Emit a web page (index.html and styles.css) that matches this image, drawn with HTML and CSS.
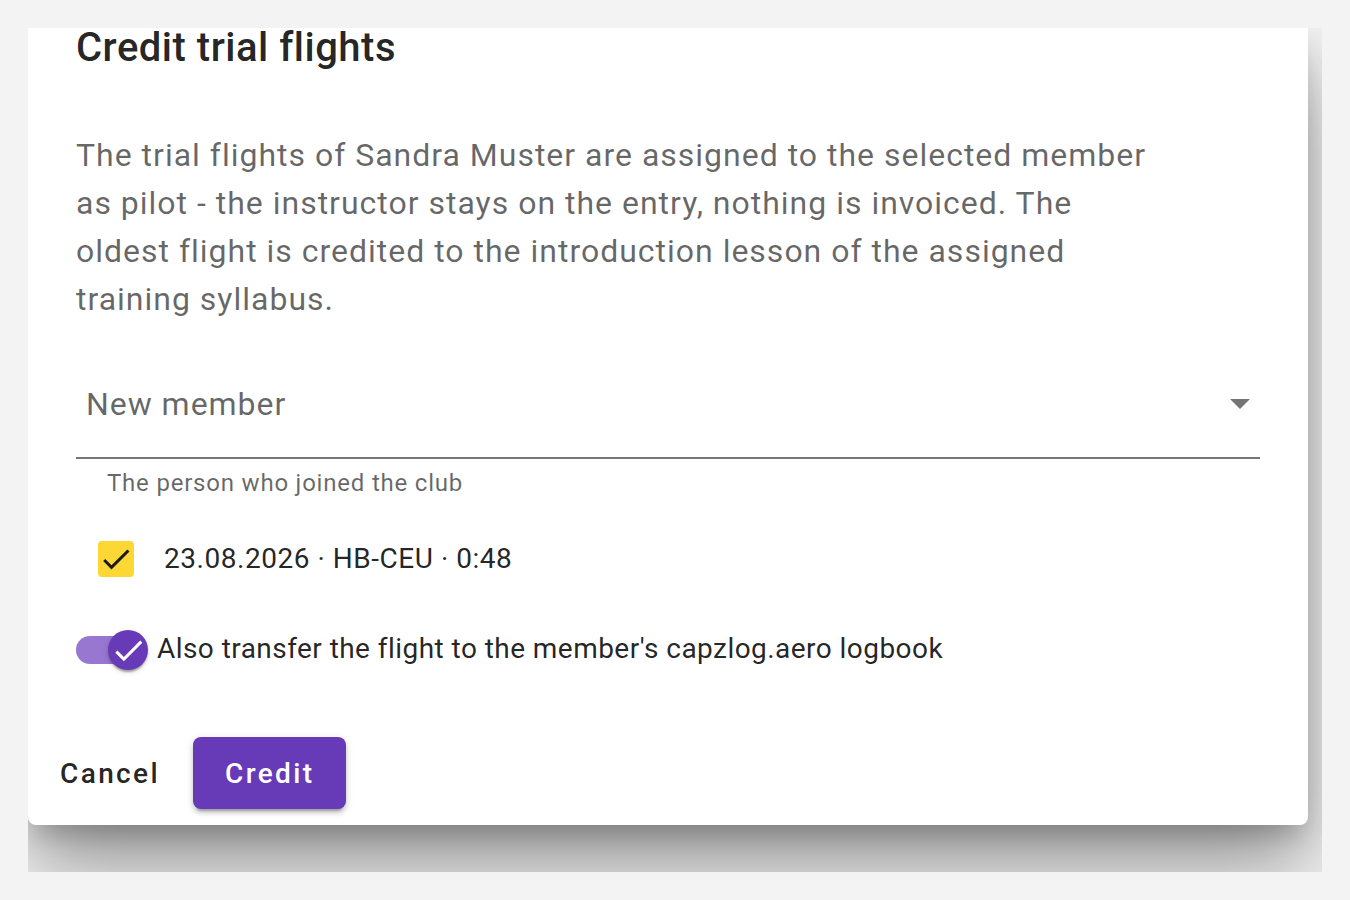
FILE: index.html
```html
<!DOCTYPE html>
<html lang="en">
<head>
<meta charset="utf-8">
<title>Credit trial flights</title>
<link rel="stylesheet" href="styles.css">
</head>
<body>
<div class="frame">
  <div class="dialog">
    <h2 class="title">Credit trial flights</h2>
    <p class="text">The trial flights of Sandra Muster are assigned to the selected member as pilot - the instructor stays on the entry, nothing is invoiced. The oldest flight is credited to the introduction lesson of the assigned training syllabus.</p>
    <div class="field">
      <div class="select">
        <span class="select-label">New member</span>
        <svg class="arrow" viewBox="7 10 10 5" width="20" height="10"><path d="M7 10l5 5 5-5z"/></svg>
      </div>
      <div class="helper">The person who joined the club</div>
    </div>
    <div class="check-row">
      <span class="checkbox">
        <svg viewBox="0 0 24 24" width="36" height="36"><path d="M9 16.17L4.83 12l-1.42 1.41L9 19 21 7l-1.41-1.41z"/></svg>
      </span>
      <span class="row-text">23.08.2026 · HB-CEU · 0:48</span>
    </div>
    <div class="switch-row">
      <span class="switch">
        <span class="track"></span>
        <span class="thumb">
          <svg viewBox="0 0 24 24" width="37" height="37"><path d="M9 16.17L4.83 12l-1.42 1.41L9 19 21 7l-1.41-1.41z"/></svg>
        </span>
      </span>
      <span class="row-text switch-text">Also transfer the flight to the member's capzlog.aero logbook</span>
    </div>
    <div class="actions">
      <button class="btn btn-text">Cancel</button>
      <button class="btn btn-primary">Credit</button>
    </div>
  </div>
</div>
</body>
</html>
```

FILE: styles.css
```css
* { box-sizing: border-box; }
html, body { margin: 0; padding: 0; }
body {
  background: #f3f3f3;
  font-family: Roboto, "Liberation Sans", Arial, sans-serif;
  padding: 28px;
}
.frame {
  width: 1294px;
  height: 844px;
  overflow: hidden;
  background: #f3f3f3;
}
.dialog {
  width: 1280px;
  background: #fff;
  border-radius: 0 0 8px 8px;
  box-shadow: 0 40px 80px rgba(0,0,0,0.4), 0 16px 24px -8px rgba(0,0,0,0.2);
  padding: 0 48px 0 48px;
}
.title {
  margin: 0;
  font-size: 40px;
  line-height: 40px;
  font-weight: 500;
  color: rgba(0,0,0,0.87);
  letter-spacing: 0.0125em;
}
.text {
  margin: 63px 0 0 0;
  max-width: 1080px;
  font-size: 32px;
  line-height: 48px;
  color: rgba(0,0,0,0.6);
  letter-spacing: 0.031em;
}
.field { margin-top: 28px; }
.select {
  height: 108px;
  border-bottom: 2px solid #767676;
  display: flex;
  align-items: center;
  justify-content: space-between;
  padding: 0 10px 0 10px;
}
.select-label {
  font-size: 32px;
  color: rgba(0,0,0,0.6);
  letter-spacing: 0.03em;
}
.arrow { fill: #757575; display: block; }
.helper {
  margin: 9px 0 0 31px;
  font-size: 24px;
  line-height: 30px;
  color: rgba(0,0,0,0.6);
  letter-spacing: 0.033em;
}
.check-row {
  margin-top: 25px;
  height: 72px;
  display: flex;
  align-items: center;
  padding-left: 22px;
}
.checkbox {
  width: 36px;
  height: 36px;
  border-radius: 4px;
  background: #fdd835;
  display: block;
  margin-right: 30px;
}
.checkbox svg { display: block; fill: #1a1a1a; }
.row-text {
  font-size: 28px;
  line-height: 48px;
  color: rgba(0,0,0,0.87);
  letter-spacing: 0.019em;
}
.switch-text { letter-spacing: 0.016em; }
.switch-row {
  margin-top: 26px;
  height: 56px;
  display: flex;
  align-items: center;
}
.switch {
  position: relative;
  width: 72px;
  height: 40px;
  margin: 2px 9px 0 0;
  flex: none;
}
.track {
  position: absolute;
  left: 0;
  top: 6px;
  width: 68px;
  height: 28px;
  border-radius: 14px;
  background: #9777cf;
}
.thumb {
  position: absolute;
  right: 0;
  top: 0;
  width: 40px;
  height: 40px;
  border-radius: 50%;
  background: #673ab7;
  box-shadow: 0 4px 2px -2px rgba(0,0,0,0.2), 0 2px 2px 0 rgba(0,0,0,0.14), 0 2px 6px 0 rgba(0,0,0,0.12);
  display: flex;
  align-items: center;
  justify-content: center;
}
.thumb svg { display: block; fill: #fff; }
.actions {
  margin: 44px 0 0 -48px;
  display: flex;
  align-items: center;
  padding: 16px;
  gap: 17px;
}
.btn {
  font-family: Roboto, "Liberation Sans", Arial, sans-serif;
  font-size: 28px;
  font-weight: 500;
  letter-spacing: 0.085em;
  border: none;
  border-radius: 8px;
  height: 72px;
  padding: 0 32px;
  cursor: pointer;
}
.btn-text {
  background: transparent;
  color: rgba(0,0,0,0.87);
  padding: 0 16px;
}
.btn-primary {
  background: #673ab7;
  color: #fff;
  box-shadow: 0 6px 2px -4px rgba(0,0,0,0.2), 0 4px 4px 0 rgba(0,0,0,0.14), 0 2px 10px 0 rgba(0,0,0,0.12);
}
```
